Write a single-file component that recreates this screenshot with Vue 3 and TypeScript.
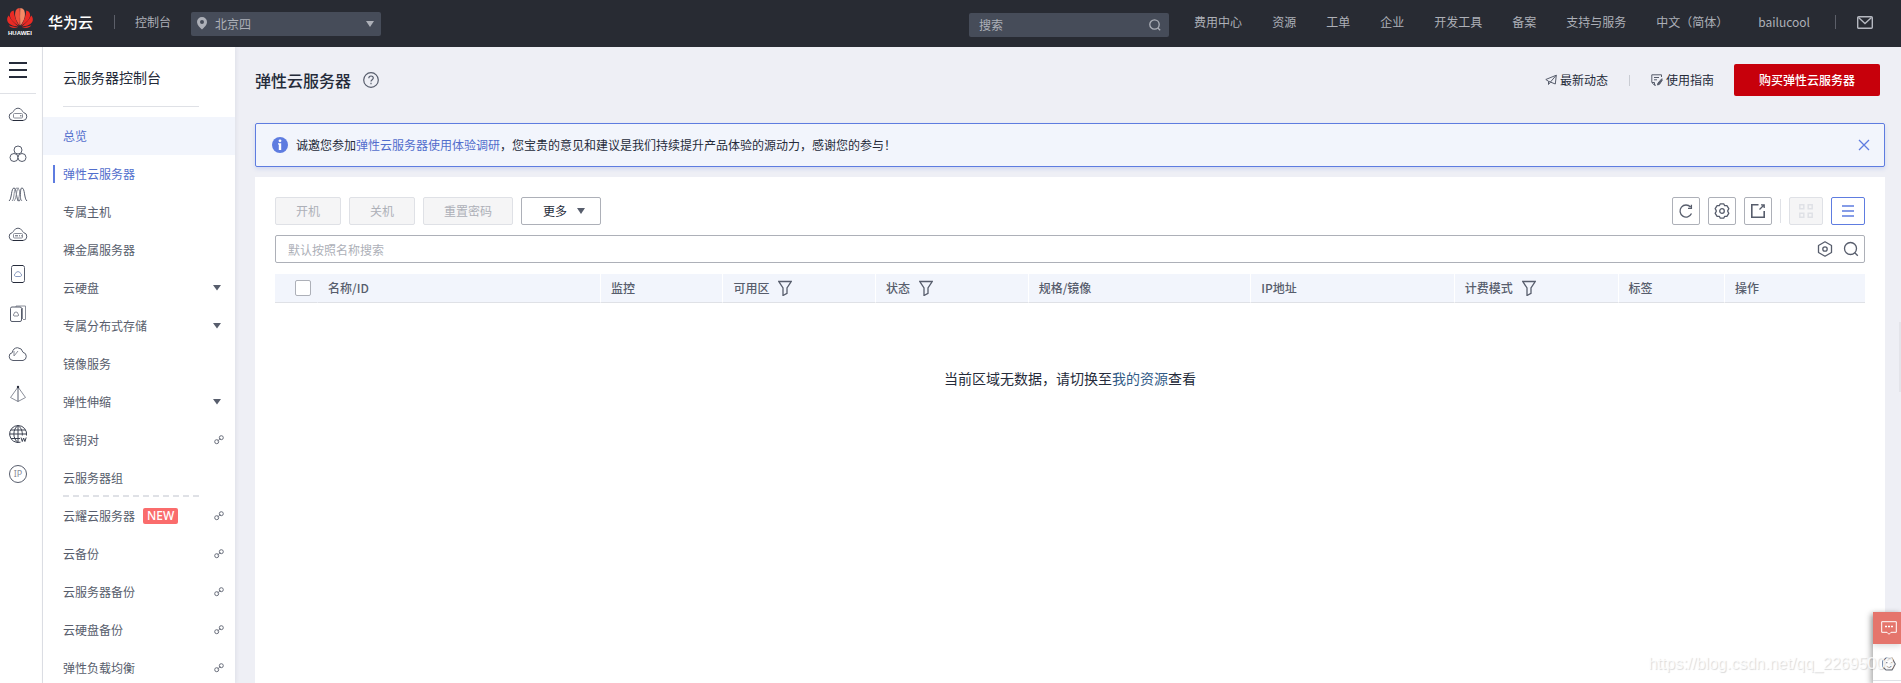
<script setup lang="ts">
import { ref } from 'vue'

interface MenuItem {
  label: string
  kind?: 'expand' | 'link'
  current?: boolean
  hover?: boolean
  badge?: string
  divided?: boolean
}

interface Column {
  label: string
  width: string
  filter?: boolean
}

const region = ref('北京四')
const globalQuery = ref('')
const nameQuery = ref('')
const allChecked = ref(false)
const showNotice = ref(true)

const topLinks: string[] = [
  '费用中心', '资源', '工单', '企业', '开发工具', '备案', '支持与服务', '中文（简体）', 'bailucool',
]

const railIcons: string[] = [
  'server', 'group', 'wave', 'baremetal', 'disk', 'disks', 'cloud', 'pyramid', 'globe', 'ip',
]

const menu: MenuItem[] = [
  { label: '总览', hover: true },
  { label: '弹性云服务器', current: true },
  { label: '专属主机' },
  { label: '裸金属服务器' },
  { label: '云硬盘', kind: 'expand' },
  { label: '专属分布式存储', kind: 'expand' },
  { label: '镜像服务' },
  { label: '弹性伸缩', kind: 'expand' },
  { label: '密钥对', kind: 'link' },
  { label: '云服务器组', divided: true },
  { label: '云耀云服务器', kind: 'link', badge: 'NEW' },
  { label: '云备份', kind: 'link' },
  { label: '云服务器备份', kind: 'link' },
  { label: '云硬盘备份', kind: 'link' },
  { label: '弹性负载均衡', kind: 'link' },
]

const columns: Column[] = [
  { label: '名称/ID', width: '17.8%' },
  { label: '监控', width: '7.7%' },
  { label: '可用区', width: '9.6%', filter: true },
  { label: '状态', width: '9.6%', filter: true },
  { label: '规格/镜像', width: '14%' },
  { label: 'IP地址', width: '12.8%' },
  { label: '计费模式', width: '10.3%', filter: true },
  { label: '标签', width: '6.7%' },
  { label: '操作', width: 'auto' },
]
</script>

<template>
  <div class="shell">
    <header class="topbar">
      <a class="brand" href="#" aria-label="华为云">
        <span class="logo">
          <svg width="26" height="20" viewBox="0 0 26 20" aria-hidden="true">
            <g fill="#ea2a24">
              <path d="M12.700 17.600C8.500 12 7 7 8.800 2.400C9.800 .8 11.500 .1 12.700 .1C13 5 13 12 12.700 17.600Z" fill="#f0503c" />
              <path d="M13.300 17.600C17.500 12 19 7 17.200 2.400C16.200 .8 14.500 .1 13.300 .1C13 5 13 12 13.300 17.600Z" fill="#f58a66" />
              <path d="M12 17.800C6 14.500 2.600 10.500 2.900 6.500C3.200 4.500 4.700 3 6.700 2.600C7 8 9.200 13.500 12 17.800Z" />
              <path d="M14 17.800C20 14.500 23.400 10.500 23.100 6.500C22.800 4.500 21.300 3 19.300 2.600C19 8 16.800 13.500 14 17.800Z" />
              <path d="M11.300 18.400C5.500 18.300 1.200 16.300 .3 12.800C-.1 10.800 .5 8.900 1.800 7.600C4 12.200 7.200 15.600 11.300 18.400Z" />
              <path d="M14.700 18.400C20.500 18.300 24.800 16.300 25.700 12.800C26.100 10.800 25.500 8.900 24.200 7.600C22 12.200 18.800 15.600 14.700 18.400Z" />
              <path d="M11 19C7.500 20.500 3.800 20.400 1.700 17.200C4.500 18.300 7.500 18.900 11 19Z" />
              <path d="M15 19C18.500 20.500 22.200 20.400 24.300 17.200C21.500 18.300 18.500 18.900 15 19Z" />
            </g>
          </svg>
          <span class="logo-name">HUAWEI</span>
        </span>
        <span class="brand-name">华为云</span>
      </a>
      <span class="bar-divider"></span>
      <a class="console-link" href="#">控制台</a>
      <label class="region">
        <svg width="10" height="13" viewBox="0 0 10 13" aria-hidden="true">
          <path d="M5 0a5 5 0 0 0-5 5c0 3 3 5.500 5 7.600C7 10.500 10 8 10 5a5 5 0 0 0-5-5Zm0 3a2 2 0 1 1 0 4 2 2 0 0 1 0-4Z" fill="#adb0b8" fill-rule="evenodd" />
        </svg>
        <select v-model="region" aria-label="区域">
          <option>北京四</option>
        </select>
        <svg width="8" height="6" viewBox="0 0 8 6" aria-hidden="true"><path d="M0 0h8L4 6Z" fill="#adb0b8" /></svg>
      </label>
      <label class="global-search">
        <input v-model="globalQuery" type="text" placeholder="搜索" aria-label="搜索" />
        <svg width="12" height="12" viewBox="0 0 12 12" fill="none" stroke="#adb0b8" stroke-width="1.300" aria-hidden="true">
          <circle cx="5.500" cy="5.500" r="4.700" /><path d="M8.800 9l2.400 2.200" />
        </svg>
      </label>
      <nav class="top-nav">
        <a v-for="link in topLinks" :key="link" href="#">{{ link }}</a>
      </nav>
      <span class="bar-divider mail-divider"></span>
      <button class="plain mail" type="button" aria-label="消息">
        <svg width="16" height="13" viewBox="0 0 16 13" fill="none" stroke="#b5b8c0" stroke-width="1.400" aria-hidden="true">
          <rect x=".7" y=".7" width="14.600" height="11.600" rx="1" /><path d="M1.500 1.500L8 7.500l6.500-6" />
        </svg>
      </button>
    </header>

    <div class="body">
      <nav class="rail" aria-label="服务">
        <button class="plain burger" type="button" aria-label="菜单">
          <svg width="18" height="16" viewBox="0 0 18 16" stroke="#252b3a" stroke-width="2" aria-hidden="true"><path d="M0 1h18M0 8h18M0 15h18" /></svg>
        </button>
        <a v-for="name in railIcons" :key="name" class="rail-item" href="#" :aria-label="name">
          <svg width="20" height="20" viewBox="0 0 20 20" fill="none" stroke="#575d6c" stroke-width="1" aria-hidden="true">
            <template v-if="name === 'server' || name === 'baremetal'">
              <path d="M5 16.500a4 4 0 0 1-.7-7.900Q5.500 7.500 6 6.500a4.600 4.600 0 0 1 8 0q.5 1 1.700 2.100a4 4 0 0 1-.7 7.900Z" />
              <rect x="5.500" y="9.500" width="9" height="4.500" rx="1" stroke="#8a8e99" />
              <path v-if="name === 'server'" d="M12 11.800h1.500" />
              <path v-else d="M7 11.800h3m1 0h1m1 0h.8" />
              <path d="M5 16.500h10" stroke="#252b3a" />
            </template>
            <template v-else-if="name === 'group'">
              <circle cx="10" cy="6" r="4" /><circle cx="6" cy="13.500" r="4" fill="#fff" /><circle cx="14" cy="13.500" r="4" fill="#fff" />
            </template>
            <template v-else-if="name === 'wave'">
              <path d="M1 17C4 15 3 4 6 4s2 13 5 13S11 4 14 4s2 11 5 13" />
              <path d="M4 17c3-2 1-13 5-13s2 11 5 13M6 17c3-3 2-13 5-13M9 17C12 16 11 4 14 4" stroke="#8a8e99" />
            </template>
            <template v-else-if="name === 'disk'">
              <rect x="3.500" y="1.500" width="13" height="17" rx="2" />
              <path d="M5 1.500h10M5 18.500h10" stroke="#252b3a" />
              <path d="M7.500 12.500a1.600 1.600 0 0 1 0-3 2.600 2.600 0 0 1 5 0 1.600 1.600 0 0 1 0 3Z" stroke="#8a9bc0" />
            </template>
            <template v-else-if="name === 'disks'">
              <path d="M8 3V2h9.500v13.500H15" stroke="#8a8e99" /><path d="M14.500 4v11" stroke="#8a8e99" />
              <rect x="2.500" y="3" width="11" height="14.500" rx="1.500" />
              <path d="M6 12a1.200 1.200 0 0 1 0-2 2 2 0 0 1 4 0 1.200 1.200 0 0 1 0 2Z" stroke="#8a8e99" />
            </template>
            <template v-else-if="name === 'cloud'">
              <path d="M5 16.500a4 4 0 0 1-.7-7.900Q5 4 9.500 3.700q4.500.3 5.500 4.600a4.200 4.200 0 0 1 0 8.200Z" />
              <path d="M6 7v5l4-5" stroke="#8a8e99" />
            </template>
            <template v-else-if="name === 'pyramid'">
              <path d="M10 3L2.500 13.500 10 17.500l7.500-4Z" stroke="#8a8e99" /><path d="M10 3v14.500" stroke="#575d6c" />
              <circle cx="10" cy="3" r="1.200" fill="#252b3a" stroke="none" />
            </template>
            <template v-else-if="name === 'globe'">
              <g stroke="#3b4150">
                <path d="M12.500 18.200A8.500 8.500 0 1 1 18.500 11.500M1.500 10h17M2.800 6h14.400M3 14.500h9M10 1.500v17" />
                <path d="M10 1.500C4.500 5 4.500 15 10 18.500M10 1.500c3.500 2.500 4.500 6 4.300 10" />
                <path d="M13 13.500l1.300 4 1.300-3.500 1.300 3.500 1.300-4" />
              </g>
            </template>
            <template v-else>
              <circle cx="10" cy="10" r="8.500" />
              <text x="10" y="13" text-anchor="middle" font-size="9" font-family="Noto Sans, sans-serif" fill="#8a8e99" stroke="none">IP</text>
            </template>
          </svg>
        </a>
      </nav>

      <aside class="side">
        <h2>云服务器控制台</h2>
        <ul>
          <li v-for="item in menu" :key="item.label" :class="{ current: item.current, hover: item.hover, divided: item.divided }">
            <a href="#">
              <span>{{ item.label }}</span>
              <span v-if="item.badge" class="badge">{{ item.badge }}</span>
              <svg v-if="item.kind === 'expand'" class="mark" width="8" height="6" viewBox="0 0 8 6" aria-hidden="true"><path d="M0 0h8L4 5.500Z" fill="#575d6c" /></svg>
              <svg v-else-if="item.kind === 'link'" class="mark link-mark" width="10" height="10" viewBox="0 0 10 10" fill="none" stroke="#6a6f7c" aria-hidden="true">
                <circle cx="2.700" cy="6.700" r="2" /><circle cx="7.300" cy="2.700" r="2" /><path d="M3.500 6L6.500 3.500" stroke-width=".8" />
              </svg>
            </a>
          </li>
        </ul>
      </aside>

      <main class="main">
        <div class="title-row">
          <h1>弹性云服务器</h1>
          <button class="plain help" type="button" aria-label="帮助">
            <svg width="16" height="16" viewBox="0 0 16 16" fill="none" stroke="#575d6c" stroke-width="1.200" aria-hidden="true">
              <circle cx="8" cy="8" r="7.300" /><path d="M5.800 6.300c0-3 4.500-3 4.500-.2C10.300 7.700 8 7.700 8 9.500M8 10.800v1.400" />
            </svg>
          </button>
          <a class="action" href="#">
            <svg width="12" height="12" viewBox="0 0 12 12" fill="none" stroke="#575d6c" aria-hidden="true">
              <path d="M11.300 1.200L.8 5.500l2.700 1.800 6.800 2.700ZM3.500 7.300v3.200l1.800-2.200M11.300 1.200l-6 7" />
            </svg>
            <span>最新动态</span>
          </a>
          <span class="action-divider"></span>
          <a class="action" href="#">
            <svg width="12" height="12" viewBox="0 0 12 12" fill="none" stroke="#575d6c" aria-hidden="true">
              <path d="M10.500 3V.8H.8V8.500l2.700 2.700H5M3 3.500h5M3 5.800h3M3.500 11V8.500H1" /><path d="M11 4.500L7 9l-.5 2 2-.7 3-4.500" fill="#575d6c" />
            </svg>
            <span>使用指南</span>
          </a>
          <button class="buy" type="button">购买弹性云服务器</button>
        </div>

        <div v-if="showNotice" class="notice">
          <svg width="16" height="16" viewBox="0 0 16 16" aria-hidden="true">
            <circle cx="8" cy="8" r="8" fill="#5e7ce0" />
            <circle cx="8" cy="3.800" r="1.400" fill="#fff" /><path d="M6 6.200h3.200V12h-2.400V7.500H6ZM6.800 10.500h2.400V13H6.800Z" fill="#fff" />
          </svg>
          <p>诚邀您参加<a href="#">弹性云服务器使用体验调研</a>，您宝贵的意见和建议是我们持续提升产品体验的源动力，感谢您的参与！</p>
          <button class="plain" type="button" aria-label="关闭" @click="showNotice = false">
            <svg width="12" height="12" viewBox="0 0 12 12" stroke="#5e7ce0" stroke-width="1.300" aria-hidden="true"><path d="M1 1l10 10M11 1L1 11" /></svg>
          </button>
        </div>

        <section class="panel">
          <div class="toolbar">
            <button class="btn" type="button" disabled>开机</button>
            <button class="btn" type="button" disabled>关机</button>
            <button class="btn wide" type="button" disabled>重置密码</button>
            <button class="btn more" type="button">
              更多
              <svg width="8" height="6" viewBox="0 0 8 6" aria-hidden="true"><path d="M0 0h8L4 6Z" fill="#575d6c" /></svg>
            </button>
            <div class="tools">
              <button class="tool" type="button" aria-label="刷新">
                <svg width="16" height="16" viewBox="0 0 16 16" fill="none" stroke="#575d6c" stroke-width="1.300" aria-hidden="true"><path d="M13.500 10.500A6 6 0 1 1 12.500 4M13.400 1.800v3.500H10" /></svg>
              </button>
              <button class="tool" type="button" aria-label="设置">
                <svg width="16" height="16" viewBox="0 0 16 16" fill="none" stroke="#575d6c" stroke-width="1.300" stroke-linejoin="round" aria-hidden="true">
                  <path d="M6.300.8h3.400l1 1.900 2.200-.1 1.900 3L13.600 8l1.200 2.400-1.900 3-2.200-.1-1 1.900H6.300l-1-1.900-2.200.1-1.900-3L2.400 8 1.200 5.600l1.900-3 2.200.1Z" /><circle cx="8" cy="8" r="2.300" />
                </svg>
              </button>
              <button class="tool" type="button" aria-label="导出">
                <svg width="16" height="16" viewBox="0 0 16 16" fill="none" stroke="#575d6c" stroke-width="1.600" aria-hidden="true"><path d="M8.500 1.800H1.800v12.400h12.400V8" /><path d="M9.500 6.500L13.500 2.500M11 1.800h3.200V5" stroke-width="1.300" /></svg>
              </button>
              <span class="tool-divider"></span>
              <button class="tool view" type="button" disabled aria-label="卡片视图">
                <svg width="16" height="16" viewBox="0 0 16 16" fill="none" stroke="#dfe1e6" stroke-width="1.500" aria-hidden="true"><path d="M1.800 1.800h4v4h-4ZM10.200 1.800h4v4h-4ZM1.800 10.200h4v4h-4ZM10.200 10.200h4v4h-4Z" /></svg>
              </button>
              <button class="tool view active" type="button" aria-label="列表视图">
                <svg width="12" height="12" viewBox="0 0 12 12" stroke="#5e7ce0" stroke-width="1.500" aria-hidden="true"><path d="M0 1h12M0 6h12M0 11h12" /></svg>
              </button>
            </div>
          </div>

          <div class="name-search">
            <input v-model="nameQuery" type="text" placeholder="默认按照名称搜索" aria-label="默认按照名称搜索" />
            <button class="plain" type="button" aria-label="搜索设置">
              <svg width="16" height="16" viewBox="0 0 16 16" fill="none" stroke="#575d6c" stroke-width="1.300" stroke-linejoin="round" aria-hidden="true"><path d="M8 .8l6.500 3.700v7L8 15.200l-6.500-3.700v-7Z" /><circle cx="8" cy="8" r="2.200" /></svg>
            </button>
            <button class="plain" type="button" aria-label="搜索">
              <svg width="16" height="16" viewBox="0 0 16 16" fill="none" stroke="#575d6c" stroke-width="1.300" aria-hidden="true"><circle cx="7.500" cy="7.500" r="6" /><path d="M11.800 11.800l3 3" /></svg>
            </button>
          </div>

          <table>
            <colgroup>
              <col class="check-col" />
              <col v-for="col in columns" :key="col.label" :style="{ width: col.width }" />
            </colgroup>
            <thead>
              <tr>
                <th class="check"><input v-model="allChecked" type="checkbox" aria-label="全选" /></th>
                <th v-for="(col, i) in columns" :key="col.label" :class="{ first: i === 0 }">
                  <div class="cell">
                    <span>{{ col.label }}</span>
                    <button v-if="col.filter" class="plain" type="button" :aria-label="col.label + '筛选'">
                      <svg width="14" height="16" viewBox="0 0 14 16" fill="none" stroke="#575d6c" stroke-width="1.300" aria-hidden="true"><path d="M.8 1.500h12.400L9 8v5.300l-4 2.200V8Z" /></svg>
                    </button>
                  </div>
                </th>
              </tr>
            </thead>
            <tbody>
              <tr>
                <td class="empty" colspan="10">当前区域无数据，请切换至<a href="#">我的资源</a>查看</td>
              </tr>
            </tbody>
          </table>
        </section>
      </main>
    </div>

    <div class="edge"></div>
    <div class="dock">
      <button class="plain chat" type="button" aria-label="咨询">
        <svg width="16" height="14" viewBox="0 0 16 14" fill="none" stroke="#fff" aria-hidden="true"><path d="M.7.7h14.600v10.600H10l-2 2-2-2H.7Z" /><path d="M4 5.500h2m1 0h2m1 0h2" stroke-width="1.500" /></svg>
      </button>
      <button class="plain smile" type="button" aria-label="反馈">
        <svg width="14" height="14" viewBox="0 0 14 14" fill="none" stroke="#6a6e79" stroke-width="1.100" aria-hidden="true"><path d="M4 1h6l3.300 6L10 13H4L.7 10V4Z" /><path d="M4.800 5v1.300M9.200 5v1.300M4.500 9c1.500 2 3.500 2 5 0" /></svg>
      </button>
    </div>
    <div class="watermark">https://blog.csdn.net/qq_22695003</div>
  </div>
</template>

<style>
html, body { margin: 0; }
</style>

<style scoped>
* { box-sizing: border-box; }
.shell {
  height: 100vh;
  display: flex;
  flex-direction: column;
  overflow: hidden;
  position: relative;
  background: #eeeff5;
  color: #252b3a;
  font: 12px/18px "Noto Sans CJK SC", "Noto Sans", sans-serif;
}
a { color: inherit; text-decoration: none; }
button, input, select { font: inherit; color: inherit; }
svg { display: block; flex: none; }
.plain { border: 0; padding: 0; background: none; display: flex; align-items: center; justify-content: center; cursor: pointer; }

.topbar { flex: none; height: 47px; padding: 0 28px 3px 7px; display: flex; align-items: center; background: #282b33; color: #adb0b8; }
.brand { display: flex; align-items: center; gap: 15px; }
.logo { width: 26px; display: flex; flex-direction: column; align-items: center; gap: 2px; }
.logo-name { font: bold 6px/6px "Liberation Sans", sans-serif; color: #fff; }
.brand-name { font-size: 15px; font-weight: 500; color: #fff; }
.bar-divider { width: 1px; height: 14px; margin-left: 21px; background: #5c5f69; }
.console-link { margin-left: 20px; }
.region { width: 190px; height: 24px; margin: 3px 0 0 20px; padding: 0 7px 0 6px; display: flex; align-items: center; background: #464c59; border-radius: 2px; }
.region select { flex: 1; height: 24px; padding: 0 8px; border: 0; background: none; appearance: none; outline: 0; }
.global-search { width: 200px; height: 24px; margin: 5px 0 0 auto; padding: 0 8px 0 10px; display: flex; align-items: center; background: #464c59; border-radius: 2px; }
.global-search input { flex: 1; min-width: 0; height: 24px; padding: 0; border: 0; background: none; outline: 0; }
.global-search input::placeholder { color: #adb0b8; }
.top-nav { margin-left: 25px; display: flex; gap: 30px; }
.mail-divider { margin-left: 25px; }
.mail { margin-left: 21px; }

.body { flex: 1; min-height: 0; display: flex; }
.rail { flex: none; width: 43px; background: #fff; border-right: 1px solid #dfe1e6; overflow: hidden; }
.burger { width: 36px; height: 47px; border-bottom: 1px solid #dfe1e6; }
.rail-item { width: 36px; height: 40px; display: flex; align-items: center; justify-content: center; }

.side { flex: none; width: 192px; background: #fff; box-shadow: 1px 0 4px rgba(40, 50, 80, .08); overflow: hidden; }
.side h2 { width: 136px; height: 60px; margin: 0 0 10px 20px; border-bottom: 1px solid #dfe1e6; font-size: 14px; font-weight: 400; line-height: 60px; }
.side ul { margin: 0; padding: 0; list-style: none; color: #575d6c; }
.side li { position: relative; }
.side li a { height: 38px; padding: 0 14px 0 20px; display: flex; align-items: center; }
.side .hover { background: #f2f5fc; }
.side .hover a, .side .current a { color: #526ecc; }
.side .current::before { content: ""; position: absolute; left: 10px; top: 10px; width: 2px; height: 18px; background: #5e7ce0; }
.side .divided::after { content: ""; position: absolute; left: 20px; bottom: 0; width: 136px; border-bottom: 2px dashed #dfe1e6; }
.mark { margin-left: auto; }
.link-mark { margin-right: -3px; }
.badge { height: 16px; margin-left: 8px; padding: 0 4px; border-radius: 2px; background: #fa6c6c; color: #fff; font-family: "Noto Sans", sans-serif; font-weight: 500; line-height: 16px; }

.main { flex: 1; min-width: 0; padding: 17px 16px 0 20px; display: flex; flex-direction: column; }
.title-row { height: 32px; padding-right: 5px; display: flex; align-items: center; }
h1 { margin: 0; font-size: 16px; font-weight: 500; line-height: 24px; }
.help { margin: 0 auto 0 12px; }
.action { display: flex; align-items: center; gap: 3px; }
.action-divider { width: 1px; height: 11px; margin: 0 21px; background: #c9ccd3; }
.buy { width: 146px; height: 32px; margin-left: 20px; border: 0; border-radius: 2px; background: #c7000b; color: #fff; font-weight: 500; }

.notice { flex: none; height: 44px; margin-top: 27px; padding: 0 14px 0 16px; display: flex; align-items: center; gap: 8px; border: 1px solid #5e7ce0; border-radius: 2px; background: #f2f5fc; box-shadow: 0 2px 4px rgba(94, 124, 224, .2); }
.notice p { flex: 1; margin: 0; }
.notice p a { color: #526ecc; }

.panel { flex: 1; margin-top: 10px; padding: 20px; background: #fff; }
.toolbar { display: flex; gap: 8px; }
.btn { width: 66px; height: 28px; padding: 0; display: flex; align-items: center; justify-content: center; gap: 10px; border: 1px solid #adb0b8; border-radius: 2px; background: #fff; }
.btn:disabled { border-color: #dfe1e6; background: #f5f5f6; color: #adb0b8; }
.btn.wide { width: 90px; }
.btn.more { width: 80px; padding-left: 6px; }
.tools { margin-left: auto; display: flex; align-items: center; gap: 8px; }
.tool { width: 28px; height: 28px; padding: 0; display: flex; align-items: center; justify-content: center; border: 1px solid #adb0b8; border-radius: 2px; background: #fff; }
.tool.view { width: 34px; }
.tool:disabled { border-color: #dfe1e6; background: #f5f5f6; }
.tool.active { border-color: #5e7ce0; }
.tool-divider { width: 1px; height: 24px; background: #dfe1e6; }

.name-search { height: 28px; margin: 10px 0 11px; padding: 0 5px 0 12px; display: flex; align-items: center; gap: 10px; border: 1px solid #adb0b8; border-radius: 2px; }
.name-search input { flex: 1; min-width: 0; height: 26px; padding: 0; border: 0; outline: 0; }
.name-search input::placeholder { color: #adb0b8; }

table { width: 100%; table-layout: fixed; border-collapse: separate; border-spacing: 0; }
.check-col { width: 42px; }
th { height: 29px; padding: 0 0 0 10px; border-left: 1px solid #fff; border-bottom: 1px solid #dfe1e6; background: #f2f5fc; color: #575d6c; font-weight: 500; text-align: left; }
th.check { padding: 0 0 0 20px; border-left: 0; }
th.first { border-left-color: #f2f5fc; }
th.check input { appearance: none; width: 16px; height: 16px; margin: 0; display: block; border: 1px solid #adb0b8; border-radius: 2px; background: #fff; }
th.check input:checked { background: #5e7ce0; }
.cell { display: flex; align-items: center; gap: 9px; }
.empty { padding: 63px 0 0; font-size: 14px; line-height: 24px; text-align: center; }
.empty a { color: #315b87; }

.edge { position: absolute; right: 0; top: 322px; width: 2px; height: 70px; background: #e3e4ea; }
.dock { position: absolute; right: 0; bottom: 0; width: 28px; height: 71px; display: flex; flex-direction: column; gap: 4px; background: #fff; box-shadow: -2px 2px 6px rgba(0, 0, 0, .35); }
.dock button { padding-left: 4px; }
.chat { height: 32px; background: #e5756c; box-shadow: 0 2px 6px rgba(0, 0, 0, .15); }
.smile { height: 33px; border-bottom: 1px solid #dfe1e6; }
.watermark { position: absolute; right: 7px; bottom: 9px; color: rgba(255, 255, 255, .8); font: 16px/20px "Liberation Sans", sans-serif; text-shadow: 1px 1px 1px rgba(0, 0, 0, .15); pointer-events: none; }
</style>
